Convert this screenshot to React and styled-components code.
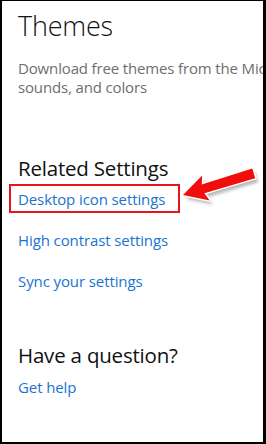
import React from "react";
import styled, { createGlobalStyle } from "styled-components";

const Global = createGlobalStyle`
  html, body { margin: 0; padding: 0; background: #fff; }
  body { font-family: "Segoe UI", "Open Sans", "Noto Sans", sans-serif; }
`;

const Frame = styled.div`
  position: relative;
  box-sizing: border-box;
  width: 266px;
  height: 444px;
  overflow: hidden;
  background: #fff;
  border-style: solid;
  border-color: #000;
  border-width: 1px 3px 2px 2px;
  padding: 7px 0 0 16px;
`;

const Title = styled.h1`
  margin: 0;
  font-size: 27px;
  line-height: 36px;
  font-weight: 300;
  color: #111;
  letter-spacing: -0.2px;
`;

const Desc = styled.p`
  margin: 15px 0 0;
  font-size: 15px;
  line-height: 19px;
  color: #6e6e6e;
  white-space: nowrap;
  letter-spacing: -0.15px;
`;

const SectionTitle = styled.h2`
  margin: ${(p) => p.$top}px 0 0;
  font-size: 20.5px;
  line-height: 26px;
  font-weight: 400;
  color: #111;
  letter-spacing: -0.2px;
`;

const LinkList = styled.div`
  display: flex;
  flex-direction: column;
  align-items: flex-start;
  gap: 19px;
  margin-top: ${(p) => p.$top}px;
`;

const Link = styled.a`
  position: relative;
  font-size: 15px;
  line-height: 22px;
  color: #1a73d1;
  text-decoration: none;
  letter-spacing: -0.1px;
`;

const Highlight = styled.span`
  position: absolute;
  left: -9px;
  top: -4px;
  width: 171px;
  height: 29px;
  box-sizing: border-box;
  border: 2px solid #e8141c;
`;

const ArrowSvg = styled.svg`
  position: absolute;
  left: 170px;
  top: 150px;
  overflow: visible;
`;

function Arrow() {
  const pts = "0,0 24,-13 21,-4.5 74,-5 74,5 21,4.5 24,13";
  return (
    <ArrowSvg width="96" height="60" viewBox="170 150 96 60">
      <defs>
        <filter id="sh" x="-30%" y="-50%" width="160%" height="200%">
          <feGaussianBlur stdDeviation="1.6" />
        </filter>
      </defs>
      <g transform="translate(184,198) rotate(-17)">
        <polygon points={pts} fill="#9a9a9a" opacity="0.7" filter="url(#sh)" />
      </g>
      <g transform="translate(181,194) rotate(-17)">
        <polygon points={pts} fill="#fff" stroke="#fff" strokeWidth="3" strokeLinejoin="round" />
        <polygon points={pts} fill="#f20d0d" />
      </g>
    </ArrowSvg>
  );
}

export default function App() {
  return (
    <>
      <Global />
      <Frame>
        <Title>Themes</Title>
        <Desc>
          Download free themes from the Microsoft Store that combine wallpapers,
          <br />
          sounds, and colors
        </Desc>
        <SectionTitle $top={58}>Related Settings</SectionTitle>
        <LinkList $top={7}>
          <Link>
            Desktop icon settings
            <Highlight />
          </Link>
          <Link>High contrast settings</Link>
          <Link>Sync your settings</Link>
        </LinkList>
        <SectionTitle $top={50}>Have a question?</SectionTitle>
        <LinkList $top={8}>
          <Link>Get help</Link>
        </LinkList>
        <Arrow />
      </Frame>
    </>
  );
}
